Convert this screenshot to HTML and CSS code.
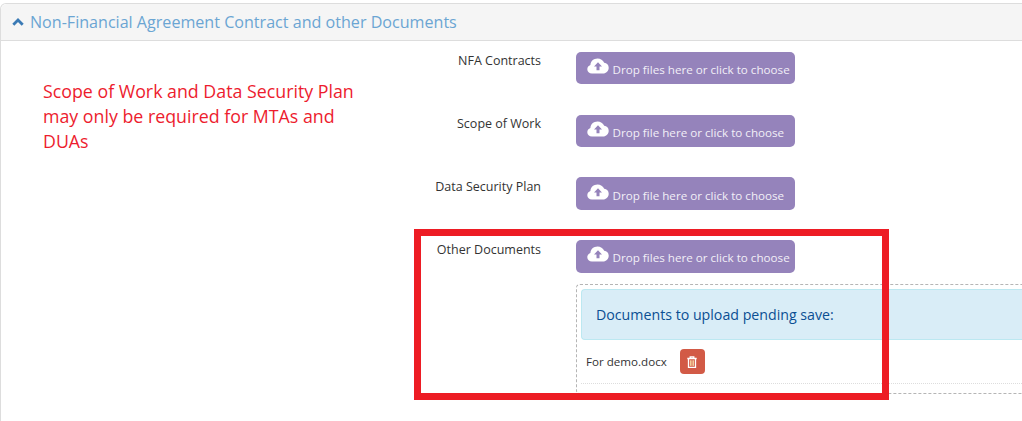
FILE: index.html
```html
<!DOCTYPE html>
<html lang="en">
<head>
<meta charset="utf-8">
<title>Documents</title>
<link rel="stylesheet" href="styles.css">
</head>
<body>
<section class="panel">
  <header class="panel-head">
    <svg class="chev" viewBox="0 0 12 8" width="12" height="8"><path d="M1.300 6.700 6 2l4.700 4.700" fill="none" stroke="#3a7ab5" stroke-width="2.800"/></svg>
    <h2 class="panel-title">Non-Financial Agreement Contract and other Documents</h2>
  </header>
  <div class="panel-body">
    <p class="note">Scope of Work and Data Security Plan may only be required for MTAs and DUAs</p>
    <div class="form">
      <div class="row">
        <div class="label">NFA Contracts</div>
        <div class="control">
          <div class="drop"><svg class="cloud" viewBox="0 0 22 16" width="22" height="16"><path d="M5 15.500C2.300 15.500.3 13.600.3 11.200c0-2 1.300-3.600 3.100-4.200C3.500 3.300 6.600.5 10.500.5c3 0 5.500 1.700 6.700 4.200 2.600.2 4.500 2.300 4.500 5 0 3.200-2.500 5.800-5.700 5.800Z" fill="#fff"/><path d="M11 4.200 15 8.500h-2.500v3.800h-3V8.500H7Z" fill="#9583bb"/></svg><span>Drop files here or click to choose</span></div>
        </div>
      </div>
      <div class="row">
        <div class="label">Scope of Work</div>
        <div class="control">
          <div class="drop"><svg class="cloud" viewBox="0 0 22 16" width="22" height="16"><path d="M5 15.500C2.300 15.500.3 13.600.3 11.200c0-2 1.300-3.600 3.100-4.200C3.500 3.300 6.600.5 10.500.5c3 0 5.500 1.700 6.700 4.200 2.600.2 4.500 2.300 4.500 5 0 3.200-2.500 5.800-5.700 5.800Z" fill="#fff"/><path d="M11 4.200 15 8.500h-2.500v3.800h-3V8.500H7Z" fill="#9583bb"/></svg><span>Drop file here or click to choose</span></div>
        </div>
      </div>
      <div class="row">
        <div class="label">Data Security Plan</div>
        <div class="control">
          <div class="drop"><svg class="cloud" viewBox="0 0 22 16" width="22" height="16"><path d="M5 15.500C2.300 15.500.3 13.600.3 11.200c0-2 1.300-3.600 3.100-4.200C3.500 3.300 6.600.5 10.500.5c3 0 5.500 1.700 6.700 4.200 2.600.2 4.500 2.300 4.500 5 0 3.200-2.500 5.800-5.700 5.800Z" fill="#fff"/><path d="M11 4.200 15 8.500h-2.500v3.800h-3V8.500H7Z" fill="#9583bb"/></svg><span>Drop file here or click to choose</span></div>
        </div>
      </div>
      <div class="row">
        <div class="label">Other Documents</div>
        <div class="control">
          <div class="drop"><svg class="cloud" viewBox="0 0 22 16" width="22" height="16"><path d="M5 15.500C2.300 15.500.3 13.600.3 11.200c0-2 1.300-3.600 3.100-4.200C3.500 3.300 6.600.5 10.500.5c3 0 5.500 1.700 6.700 4.200 2.600.2 4.500 2.300 4.500 5 0 3.200-2.500 5.800-5.700 5.800Z" fill="#fff"/><path d="M11 4.200 15 8.500h-2.500v3.800h-3V8.500H7Z" fill="#9583bb"/></svg><span>Drop files here or click to choose</span></div>
          <div class="pending">
            <div class="alert">Documents to upload pending save:</div>
            <div class="file">
              <span class="file-name">For demo.docx</span>
              <button class="trash" type="button" aria-label="Delete"><svg viewBox="0 0 10 12" width="10" height="12"><path d="M.3 2.500h9.400M3.200 2.300V.8h3.600v1.500M1.500 2.800v8.500h7V2.800" fill="none" stroke="#fff" stroke-width="1.300"/><path d="M3.600 4.300v5.600M5 4.300v5.600M6.400 4.300v5.600" stroke="#f6dca6" stroke-width="1"/></svg></button>
            </div>
          </div>
        </div>
      </div>
    </div>
  </div>
</section>
<div class="highlight"></div>
</body>
</html>
```
FILE: styles.css
```css
* { box-sizing: border-box; }
html, body { height: 100%; }
body {
  margin: 0;
  overflow: hidden;
  background: #fff;
  font-family: "Open Sans", sans-serif;
  color: #333;
  position: relative;
}
.panel {
  margin: 3px -20px 0 0;
  height: 418px;
  border: 1px solid #ddd;
  border-bottom: 0;
  border-radius: 6px 0 0 0;
}
.panel-head {
  height: 37px;
  display: flex;
  align-items: center;
  gap: 6px;
  padding: 0 0 0 11px;
  background: #f5f5f5;
  border-bottom: 1px solid #ddd;
  border-radius: 6px 0 0 0;
}
.chev { display: block; }
.panel-title {
  margin: 0;
  font-size: 16.100px;
  font-weight: 400;
  color: #6ba5d3;
  white-space: nowrap;
}
.panel-body {
  display: flex;
  align-items: flex-start;
}
.note {
  width: 334px;
  margin: 38px 0 0 42px;
  padding-right: 8px;
  font-size: 17.800px;
  line-height: 25px;
  color: #ed1c2e;
  flex: none;
}
.form {
  margin: 10.800px 0 0 0;
  flex: 1;
  min-width: 0;
}
.row {
  display: flex;
  margin-bottom: 30.300px;
}
.row:last-child { margin-bottom: 0; }
.label {
  width: 164px;
  padding-top: .5px;
  text-align: right;
  font-size: 12.500px;
  line-height: 18px;
  color: #333;
  flex: none;
}
.control {
  margin-left: 35px;
  width: 480px;
  flex: none;
}
.drop {
  width: 219px;
  height: 32.500px;
  display: flex;
  align-items: center;
  padding-left: 10.500px;
  gap: 4px;
  background: #9583bb;
  border-radius: 5px;
  color: #f2eff7;
  font-size: 11.650px;
  white-space: nowrap;
}
.cloud { display: block; margin-top: -4px; }
.drop span { padding-top: 3px; }
.pending {
  margin-top: 11px;
  height: 110px;
  border: 1px dashed #b5b5b5;
  border-right: 0;
  border-radius: 4px 0 0 4px;
  padding: 4px;
}
.alert {
  height: 51px;
  display: flex;
  align-items: center;
  padding-left: 14px;
  margin-right: -4px;
  background: #d9edf7;
  border: 1px solid #bce8f1;
  border-right: 0;
  border-radius: 4px 0 0 4px;
  color: #0b4f93;
  font-size: 14.200px;
}
.file {
  display: flex;
  align-items: center;
  gap: 13px;
  height: 44px;
  padding: 1px 0 0 5px;
  margin-right: -4px;
  border-bottom: 1px dotted #ddd;
}
.file-name { font-size: 11.600px; color: #333; }
.trash {
  width: 25px;
  height: 25px;
  padding: 0;
  border: 0;
  border-radius: 4px;
  background: #d25a46;
  display: flex;
  align-items: center;
  justify-content: center;
}
.highlight {
  position: absolute;
  left: 414px;
  top: 229px;
  width: 475px;
  height: 171px;
  border: 7px solid #ed1c24;
}
```
